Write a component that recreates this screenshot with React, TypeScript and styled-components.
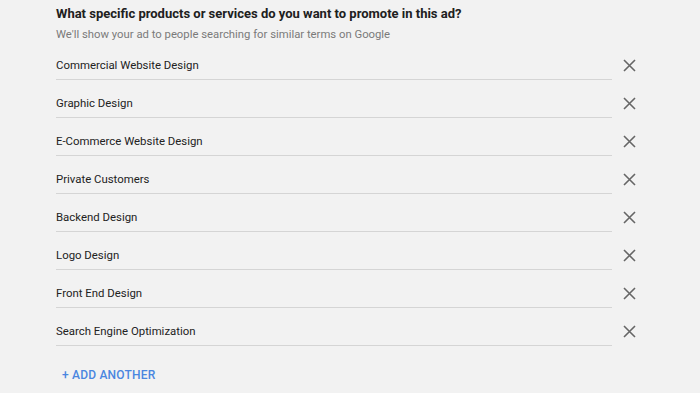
import styled, { createGlobalStyle } from "styled-components";

const GlobalStyle = createGlobalStyle`
  html, body {
    margin: 0;
    padding: 0;
    background: #f2f2f2;
  }
  body {
    font-family: Roboto, "Liberation Sans", Arial, sans-serif;
    -webkit-font-smoothing: antialiased;
  }
`;

const Page = styled.div`
  width: 700px;
  height: 393px;
  box-sizing: border-box;
  padding: 6px 0 0 56px;
  background: #f2f2f2;
  overflow: hidden;
`;

const Title = styled.h2`
  margin: 0;
  font-size: 13px;
  line-height: 16px;
  font-weight: 700;
  color: #202020;
`;

const Subtitle = styled.p`
  margin: 6px 0 0;
  font-size: 11.3px;
  line-height: 14px;
  color: #7a7a7a;
`;

const List = styled.ul`
  list-style: none;
  margin: 0;
  padding: 0;
`;

const Row = styled.li`
  display: flex;
  align-items: flex-start;
  gap: 10px;
`;

const Field = styled.div`
  width: 556px;
  padding: 15px 0 6px;
  border-bottom: 1px solid #d5d5d5;
  font-size: 11.4px;
  line-height: 16px;
  color: #222;
`;

const RemoveButton = styled.button`
  margin-top: 16px;
  width: 14px;
  height: 14px;
  padding: 0;
  border: none;
  background: none;
  display: flex;
  align-items: center;
  justify-content: center;
  cursor: pointer;
`;

const AddButton = styled.button`
  margin: 21px 0 0 6px;
  padding: 0;
  border: none;
  background: none;
  font-family: inherit;
  font-size: 12px;
  line-height: 16px;
  font-weight: 500;
  letter-spacing: 0.2px;
  color: #4a86e0;
  cursor: pointer;
`;

const CloseIcon = () => (
  <svg width="13" height="13" viewBox="0 0 13 13">
    <path d="M1 1 L12 12 M12 1 L1 12" stroke="#666" strokeWidth="1.6" />
  </svg>
);

const items = [
  "Commercial Website Design",
  "Graphic Design",
  "E-Commerce Website Design",
  "Private Customers",
  "Backend Design",
  "Logo Design",
  "Front End Design",
  "Search Engine Optimization",
];

export default function App() {
  return (
    <>
      <GlobalStyle />
      <Page>
        <Title>What specific products or services do you want to promote in this ad?</Title>
        <Subtitle>We'll show your ad to people searching for similar terms on Google</Subtitle>
        <List>
          {items.map((item) => (
            <Row key={item}>
              <Field>{item}</Field>
              <RemoveButton aria-label={`Remove ${item}`}>
                <CloseIcon />
              </RemoveButton>
            </Row>
          ))}
        </List>
        <AddButton>+ ADD ANOTHER</AddButton>
      </Page>
    </>
  );
}
